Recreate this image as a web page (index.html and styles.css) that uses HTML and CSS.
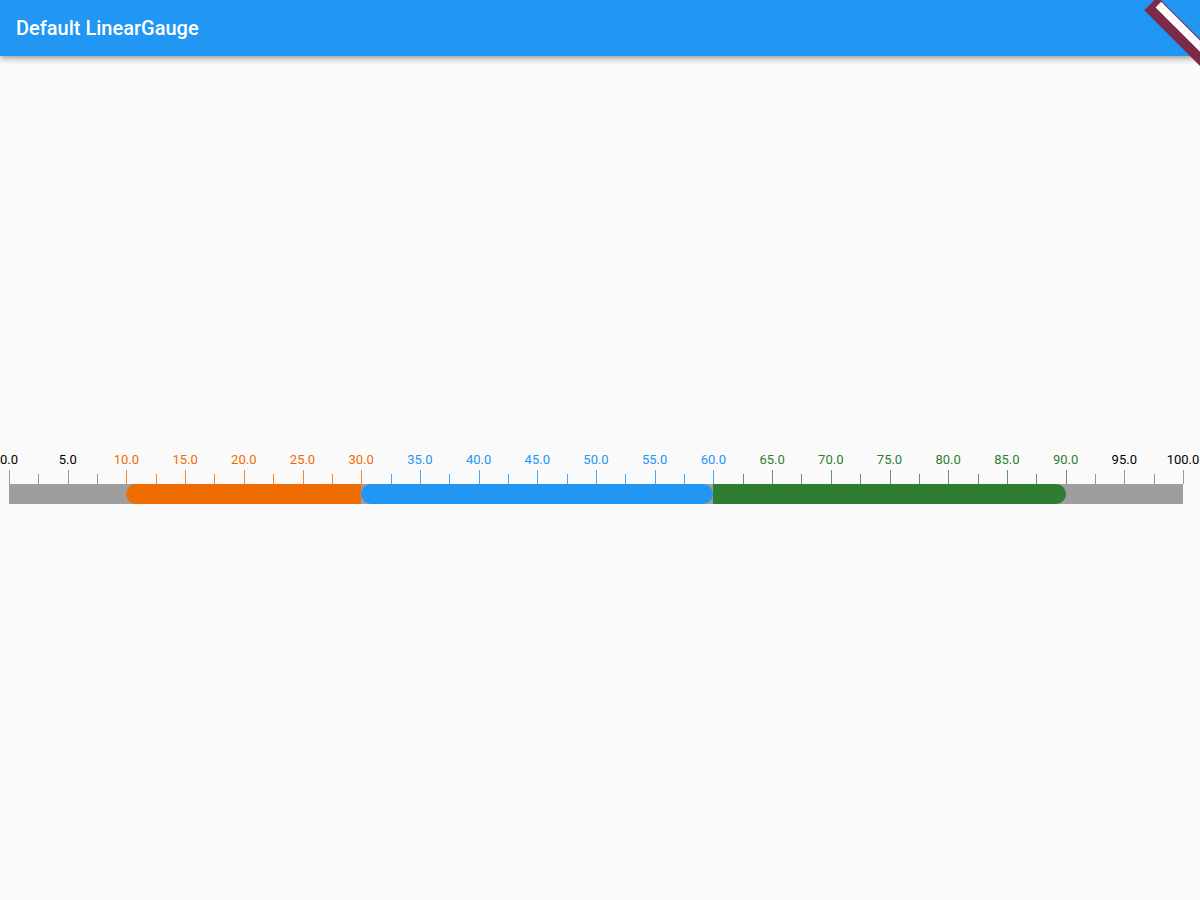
FILE: index.html
```html
<!DOCTYPE html>
<html>
<head>
<meta charset="utf-8">
<title>Default LinearGauge</title>
<link rel="stylesheet" href="styles.css">
</head>
<body>
<div class="app">
  <header class="appbar">
    <h1 class="title">Default LinearGauge</h1>
  </header>
  <main class="content">
    <div class="gauge">
      <div class="labels">
        <span class="label c-gray" style="left:0%">0.0</span>
        <span class="label c-gray" style="left:5%">5.0</span>
        <span class="label c-orange" style="left:10%">10.0</span>
        <span class="label c-orange" style="left:15%">15.0</span>
        <span class="label c-orange" style="left:20%">20.0</span>
        <span class="label c-orange" style="left:25%">25.0</span>
        <span class="label c-orange" style="left:30%">30.0</span>
        <span class="label c-blue" style="left:35%">35.0</span>
        <span class="label c-blue" style="left:40%">40.0</span>
        <span class="label c-blue" style="left:45%">45.0</span>
        <span class="label c-blue" style="left:50%">50.0</span>
        <span class="label c-blue" style="left:55%">55.0</span>
        <span class="label c-blue" style="left:60%">60.0</span>
        <span class="label c-green" style="left:65%">65.0</span>
        <span class="label c-green" style="left:70%">70.0</span>
        <span class="label c-green" style="left:75%">75.0</span>
        <span class="label c-green" style="left:80%">80.0</span>
        <span class="label c-green" style="left:85%">85.0</span>
        <span class="label c-green" style="left:90%">90.0</span>
        <span class="label c-gray" style="left:95%">95.0</span>
        <span class="label c-gray" style="left:100%">100.0</span>
      </div>
      <div class="ticks">
        <i class="tick major t-gray" style="left:0%"></i>
        <i class="tick minor t-gray" style="left:2.5%"></i>
        <i class="tick major t-gray" style="left:5%"></i>
        <i class="tick minor t-gray" style="left:7.5%"></i>
        <i class="tick major t-orange" style="left:10%"></i>
        <i class="tick minor t-orange" style="left:12.5%"></i>
        <i class="tick major t-orange" style="left:15%"></i>
        <i class="tick minor t-orange" style="left:17.5%"></i>
        <i class="tick major t-orange" style="left:20%"></i>
        <i class="tick minor t-orange" style="left:22.5%"></i>
        <i class="tick major t-orange" style="left:25%"></i>
        <i class="tick minor t-orange" style="left:27.5%"></i>
        <i class="tick major t-orange" style="left:30%"></i>
        <i class="tick minor t-blue" style="left:32.5%"></i>
        <i class="tick major t-blue" style="left:35%"></i>
        <i class="tick minor t-blue" style="left:37.5%"></i>
        <i class="tick major t-blue" style="left:40%"></i>
        <i class="tick minor t-blue" style="left:42.5%"></i>
        <i class="tick major t-blue" style="left:45%"></i>
        <i class="tick minor t-blue" style="left:47.5%"></i>
        <i class="tick major t-blue" style="left:50%"></i>
        <i class="tick minor t-blue" style="left:52.5%"></i>
        <i class="tick major t-blue" style="left:55%"></i>
        <i class="tick minor t-blue" style="left:57.5%"></i>
        <i class="tick major t-blue" style="left:60%"></i>
        <i class="tick minor t-green" style="left:62.5%"></i>
        <i class="tick major t-green" style="left:65%"></i>
        <i class="tick minor t-green" style="left:67.5%"></i>
        <i class="tick major t-green" style="left:70%"></i>
        <i class="tick minor t-green" style="left:72.5%"></i>
        <i class="tick major t-green" style="left:75%"></i>
        <i class="tick minor t-green" style="left:77.5%"></i>
        <i class="tick major t-green" style="left:80%"></i>
        <i class="tick minor t-green" style="left:82.5%"></i>
        <i class="tick major t-green" style="left:85%"></i>
        <i class="tick minor t-green" style="left:87.5%"></i>
        <i class="tick major t-green" style="left:90%"></i>
        <i class="tick minor t-gray" style="left:92.5%"></i>
        <i class="tick major t-gray" style="left:95%"></i>
        <i class="tick minor t-gray" style="left:97.5%"></i>
        <i class="tick major t-gray" style="left:100%"></i>
      </div>
      <div class="bar">
        <div class="seg" style="width:10%"></div>
        <div class="seg range r-orange" style="width:20%"></div>
        <div class="seg range r-blue" style="width:30%"></div>
        <div class="seg range r-green" style="width:30%"></div>
        <div class="seg" style="width:10%"></div>
      </div>
    </div>
  </main>
  <div class="debug-banner"><div class="debug-stripe"></div></div>
</div>
</body>
</html>
```

FILE: styles.css
```css
html, body {
  margin: 0;
  padding: 0;
  width: 100%;
  height: 100%;
  overflow: hidden;
}

body {
  background: #fafafa;
  font-family: Roboto, "Liberation Sans", sans-serif;
}

.app {
  position: relative;
  width: 1200px;
  height: 900px;
  display: flex;
  flex-direction: column;
  overflow: hidden;
}

.appbar {
  height: 56px;
  flex: 0 0 56px;
  background: #2196f3;
  display: flex;
  align-items: center;
  padding: 0 16px;
  box-shadow: 0 2px 4px -1px rgba(0, 0, 0, 0.2),
              0 4px 5px 0 rgba(0, 0, 0, 0.14),
              0 1px 10px 0 rgba(0, 0, 0, 0.12);
  position: relative;
  z-index: 1;
}

.title {
  margin: 0;
  color: #ffffff;
  font-size: 20px;
  font-weight: 500;
  line-height: 24px;
  letter-spacing: 0;
}

.content {
  flex: 1;
  display: flex;
  flex-direction: column;
  justify-content: center;
}

.gauge {
  margin-left: 9px;
  width: 1174px;
}

.labels {
  position: relative;
  height: 15px;
  margin-bottom: 3px;
}

.label {
  position: absolute;
  top: 0;
  transform: translateX(-50%);
  font-size: 13px;
  line-height: 15px;
  white-space: nowrap;
}

.c-gray { color: #000000; }
.c-orange { color: #ef6c00; }
.c-blue { color: #2196f3; }
.c-green { color: #2e7d32; }

.ticks {
  position: relative;
  height: 14px;
}

.tick {
  position: absolute;
  bottom: 0;
  width: 1px;
  display: block;
}

.tick.major { height: 14px; }
.tick.minor { height: 10px; }

.t-gray { background: #9a9a9a; }
.t-orange { background: #f08a3a; }
.t-blue { background: #4aa8f5; }
.t-green { background: #5a9a5d; }

.bar {
  display: flex;
  height: 20px;
  background: #9e9e9e;
}

.seg {
  height: 100%;
  flex: 0 0 auto;
}

.r-orange {
  background: #ef6c00;
  border-radius: 10px 0 0 10px;
}

.r-blue {
  background: #2196f3;
  border-radius: 10px;
}

.r-green {
  background: #2e7d32;
  border-radius: 0 10px 10px 0;
}

.debug-banner {
  position: absolute;
  left: 1151px;
  top: -6px;
  width: 110px;
  height: 19px;
  background: #7c2a4a;
  transform-origin: 0 50%;
  transform: rotate(45deg);
  z-index: 5;
  padding: 1px 0 10px 6px;
  box-sizing: border-box;
}

.debug-stripe {
  height: 8px;
  background: #ffffff;
  position: relative;
}

.debug-stripe::after {
  content: "";
  position: absolute;
  left: 0;
  right: 0;
  top: 3px;
  border-top: 1px dashed #e8e8e8;
}
```
